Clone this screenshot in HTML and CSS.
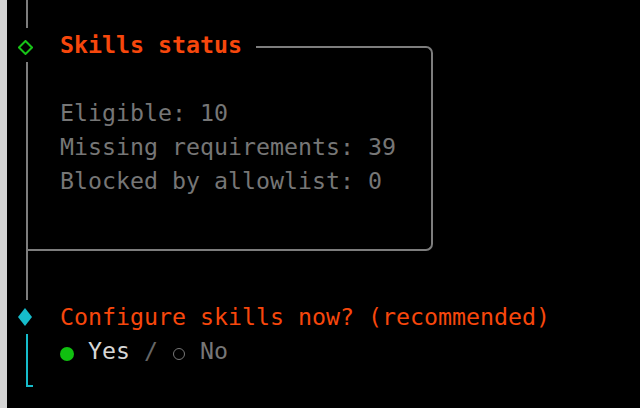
FILE: index.html
```html
<!DOCTYPE html>
<html>
<head>
<meta charset="utf-8">
<link rel="stylesheet" href="styles.css">
</head>
<body>
<div class="window">
  <div class="edge"></div>
  <div class="term">
    <div class="seg rail-top"></div>
    <div class="head">
      <div class="gut">
        <svg class="dia-out" width="15" height="15" viewBox="0 0 15 15"><polygon points="7.5,1 14,7.5 7.5,14 1,7.5" fill="none" stroke="#17c317" stroke-width="2"/></svg>
      </div>
      <div class="title bold">Skills status</div>
      <div class="tline"></div>
    </div>
    <div class="seg rail-body">
      <div class="box">
        <div class="line">Eligible: 10</div>
        <div class="line">Missing requirements: 39</div>
        <div class="line">Blocked by allowlist: 0</div>
      </div>
    </div>
    <div class="head">
      <div class="gut">
        <svg class="dia-fill" width="14" height="18" viewBox="0 0 14 18"><polygon points="7,0 14,9 7,18 0,9" fill="#16bccb"/></svg>
      </div>
      <div class="title">Configure skills now? (recommended)</div>
    </div>
    <div class="seg rail-cyan">
      <div class="opts"><span class="sym"><span class="dot"></span></span> <span class="yes">Yes</span> <span class="sep">/</span> <span class="sym"><span class="ring"></span></span> <span class="no">No</span></div>
    </div>
    <div class="corner"></div>
  </div>
</div>
</body>
</html>
```
FILE: styles.css
```css
html, body {
  margin: 0;
  padding: 0;
  background: #000;
}
body {
  font-family: "DejaVu Sans Mono", "Liberation Mono", monospace;
  font-size: 23.25px;
  line-height: 34px;
  color: #767676;
}
.window {
  display: flex;
  height: 408px;
  overflow: hidden;
}
.edge {
  flex: none;
  width: 7px;
  background: #d5d5d5;
}
.term {
  flex: 1;
  padding-left: 11px;
}
.seg {
  margin-left: 8px;
  border-left: 2px solid #7d7d7d;
}
.rail-top {
  height: 28px;
}
.head {
  display: flex;
  height: 34px;
  width: 415px;
}
.gut {
  flex: none;
  width: 14px;
  display: flex;
  justify-content: center;
  align-items: flex-start;
}
.dia-out {
  flex: none;
  margin-top: 12px;
}
.dia-fill {
  flex: none;
  margin-top: 8px;
}
.title {
  margin-left: 28px;
  color: #f7470c;
  white-space: pre;
}
.bold {
  font-weight: bold;
}
.tline {
  flex: 1;
  margin-left: 14px;
  margin-top: 18px;
  border-top: 2px solid #7d7d7d;
  border-right: 2px solid #7d7d7d;
  border-top-right-radius: 7px;
}
.rail-body {
  box-sizing: border-box;
  width: 407px;
  padding-bottom: 49px;
}
.box {
  padding: 34px 0 51px 32px;
  border-right: 2px solid #7d7d7d;
  border-bottom: 2px solid #7d7d7d;
  border-bottom-right-radius: 7px;
}
.line {
  height: 34px;
  white-space: pre;
}
.rail-cyan {
  border-left-color: #16bccb;
}
.opts {
  height: 34px;
  padding-left: 32px;
  white-space: pre;
}
.sym {
  display: inline-block;
  width: 14px;
  height: 34px;
  vertical-align: top;
  position: relative;
}
.dot {
  position: absolute;
  left: 0;
  top: 13px;
  width: 14px;
  height: 14px;
  border-radius: 50%;
  background: #10c010;
}
.ring {
  position: absolute;
  left: 1px;
  top: 14px;
  width: 12px;
  height: 12px;
  border-radius: 50%;
  border: 1.5px solid #777;
  box-sizing: border-box;
}
.yes {
  color: #d6d6d6;
}
.sep {
  color: #666;
}
.no {
  color: #767676;
}
.corner {
  margin-left: 8px;
  width: 7px;
  height: 19px;
  box-sizing: border-box;
  border-left: 2px solid #16bccb;
  border-bottom: 2px solid #16bccb;
}
```
